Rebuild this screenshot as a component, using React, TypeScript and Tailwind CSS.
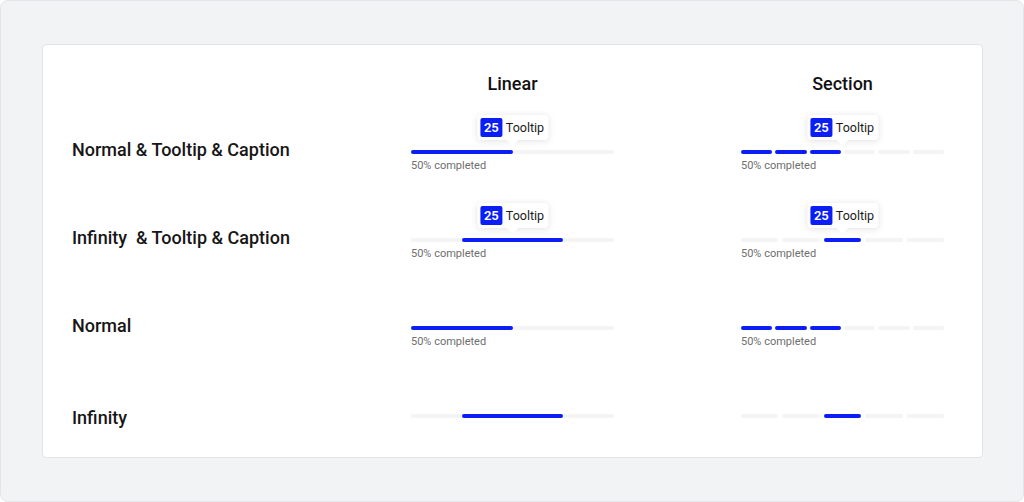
import React from 'react';

const BLUE = 'bg-[#0a1ef5]';

function Tooltip() {
  return (
    <div className="absolute bottom-[14px] left-1/2 -translate-x-1/2">
      <div className="relative flex items-center gap-[3px] rounded-[4px] bg-white p-[3px] pr-[4px] shadow-[0_1px_7px_rgba(0,0,0,0.12)]">
        <span className={`${BLUE} rounded-[2px] px-[4px] text-[13px] leading-[19px] font-semibold text-white`}>
          25
        </span>
        <span className="text-[12.5px] leading-[19px] text-[#1b1b1b]">Tooltip</span>
        <span className="absolute -bottom-[4px] left-1/2 h-[8px] w-[8px] -translate-x-1/2 rotate-45 bg-white" />
      </div>
    </div>
  );
}

function Caption() {
  return (
    <div className="mt-[4px] text-[11px] leading-[15px] text-[#6e6e6e]">50% completed</div>
  );
}

function LinearBar({ infinity }: { infinity?: boolean }) {
  return (
    <div className="h-[4px] w-full rounded-full bg-[#f4f4f5]">
      <div
        className={`${BLUE} h-full rounded-full ${infinity ? 'ml-[25%] w-1/2' : 'w-1/2'}`}
      />
    </div>
  );
}

function SectionBar({ infinity }: { infinity?: boolean }) {
  const count = infinity ? 5 : 6;
  const filled = (i: number) => (infinity ? i === 2 : i < 3);
  return (
    <div className={`flex h-[4px] w-full ${infinity ? 'gap-[4px]' : 'gap-[3px]'}`}>
      {Array.from({ length: count }).map((_, i) => (
        <div
          key={i}
          className={`h-full flex-1 rounded-full ${filled(i) ? BLUE : 'bg-[#f4f4f5]'}`}
        />
      ))}
    </div>
  );
}

const rows = [
  { label: 'Normal & Tooltip & Caption', tooltip: true, caption: true, infinity: false },
  { label: 'Infinity  & Tooltip & Caption', tooltip: true, caption: true, infinity: true },
  { label: 'Normal', tooltip: false, caption: true, infinity: false },
  { label: 'Infinity', tooltip: false, caption: false, infinity: true },
];

export default function App() {
  return (
    <div
      className="h-[502px] w-[1024px] rounded-[8px] border border-[#e4e5e8] bg-[#f2f3f5] pt-[43px] pl-[41px]"
      style={{ fontFamily: 'Roboto, "Noto Sans", sans-serif' }}
    >
      <div className="h-[414px] w-[941px] rounded-[4px] border border-[#e2e3e7] bg-white px-[29px]">
        <div className="grid grid-cols-[339px_203px_127px_203px] pt-[27px]">
          <div />
          <div className="h-[36px] text-center text-[18px] leading-[24px] font-medium text-[#111]">Linear</div>
          <div />
          <div className="h-[36px] text-center text-[18px] leading-[24px] font-medium text-[#111]">Section</div>
        </div>
        {rows.map((row, idx) => (
          <div
            key={row.label}
            className={`grid grid-cols-[339px_203px_127px_203px] ${idx === 3 ? 'h-[86px]' : 'h-[88px]'}`}
          >
            <div
              className={`${idx === 3 ? 'pt-[34px]' : 'pt-[30px]'} text-[18px] leading-[24px] font-medium whitespace-pre text-[#161616]`}
            >
              {row.label}
            </div>
            <div className="pt-[42px]">
              <div className="relative">
                {row.tooltip && <Tooltip />}
                <LinearBar infinity={row.infinity} />
              </div>
              {row.caption && <Caption />}
            </div>
            <div />
            <div className="pt-[42px]">
              <div className="relative">
                {row.tooltip && <Tooltip />}
                <SectionBar infinity={row.infinity} />
              </div>
              {row.caption && <Caption />}
            </div>
          </div>
        ))}
      </div>
    </div>
  );
}
